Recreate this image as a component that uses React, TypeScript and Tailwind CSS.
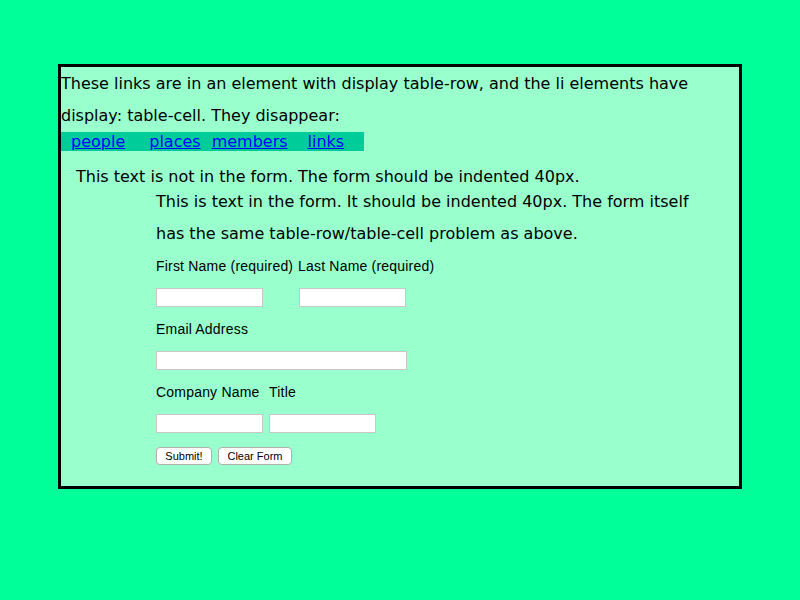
export default function App() {
  const body = { fontFamily: '"DejaVu Sans", Verdana, sans-serif' };
  const arial = { fontFamily: '"Liberation Sans", Arial, sans-serif' };
  return (
    <div className="w-[800px] h-[600px] bg-[#00ff99] pt-[64px] px-[58px]">
      <div className="border-[3px] border-black bg-[#99ffcc] h-[425px] text-black" style={body}>
        <p className="text-[16px] leading-[32px] pr-4 pt-[1px] h-[65px]">
          These links are in an element with display table-row, and the li elements have display: table-cell. They disappear:
        </p>
        <div className="flex w-[303px] h-[19px] bg-[#00cc99] text-[16px] leading-[19px]">
          <a className="ml-[10px] text-[#0000ff] underline" href="#">people</a>
          <a className="ml-[24px] text-[#0000ff] underline" href="#">places</a>
          <a className="ml-[11px] text-[#0000ff] underline" href="#">members</a>
          <a className="ml-[20px] text-[#0000ff] underline" href="#">links</a>
        </div>
        <p className="mt-[16px] ml-[15px] text-[16px] leading-[19px]">
          This text is not in the form. The form should be indented 40px.
        </p>
        <div className="ml-[95px]">
          <p className="text-[16px] leading-[32px] w-[560px]">
            This is text in the form. It should be indented 40px. The form itself has the same table-row/table-cell problem as above.
          </p>
          <div className="text-[14px] tracking-[0.2px]" style={arial}>
            <div className="flex h-[36px] pt-[8px] leading-[16px]">
              <span className="w-[142px]">First Name (required)</span>
              <span>Last Name (required)</span>
            </div>
            <div className="flex h-[27px] items-start pt-[2px]">
              <input className="w-[107px] h-[19px] bg-white border border-[#c8c8c8]" />
              <input className="ml-[36px] w-[107px] h-[19px] bg-white border border-[#c8c8c8]" />
            </div>
            <div className="flex h-[36px] pt-[8px] leading-[16px]">
              <span>Email Address</span>
            </div>
            <div className="flex h-[27px] items-start pt-[2px]">
              <input className="w-[251px] h-[19px] bg-white border border-[#c8c8c8]" />
            </div>
            <div className="flex h-[36px] pt-[8px] leading-[16px]">
              <span className="w-[113px]">Company Name</span>
              <span>Title</span>
            </div>
            <div className="flex h-[35px] items-start pt-[2px]">
              <input className="w-[107px] h-[19px] bg-white border border-[#c8c8c8]" />
              <input className="ml-[6px] w-[107px] h-[19px] bg-white border border-[#c8c8c8]" />
            </div>
            <div className="flex gap-[6px] tracking-normal">
              <button className="w-[56px] h-[18px] bg-white border border-[#b0b0b0] rounded-[4px] text-[11px] leading-[16px]">Submit!</button>
              <button className="w-[74px] h-[18px] bg-white border border-[#b0b0b0] rounded-[4px] text-[11px] leading-[16px]">Clear Form</button>
            </div>
          </div>
        </div>
      </div>
    </div>
  );
}
